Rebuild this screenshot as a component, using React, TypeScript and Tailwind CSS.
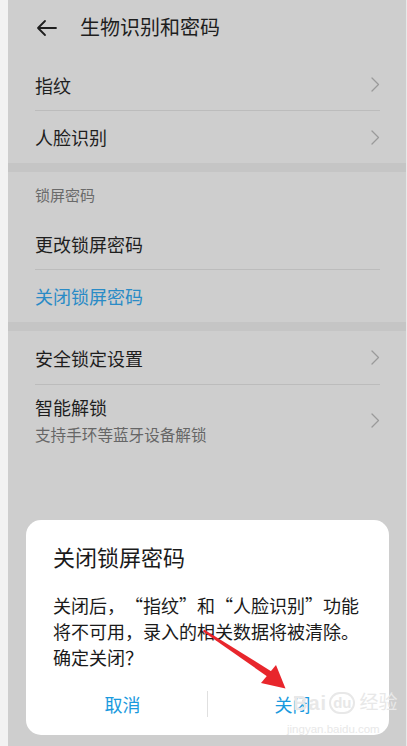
import React from "react";

const font = { fontFamily: '"Noto Sans CJK SC", "Noto Sans", sans-serif' };

function Chevron() {
  return (
    <svg width="10" height="17" viewBox="0 0 10 17" className="shrink-0">
      <path d="M2 2 L8.5 8.5 L2 15" fill="none" stroke="#9a9a9a" strokeWidth="1.3" strokeLinecap="round" strokeLinejoin="round" />
    </svg>
  );
}

function Row({ title, blue, chevron, h }: { title: string; blue?: boolean; chevron?: boolean; h: string }) {
  return (
    <div className={`flex items-center justify-between pl-[27px] pr-[26px] ${h}`}>
      <span className={`text-[18px] leading-[24px] ${blue ? "text-[#2a8bc6]" : "text-[#1e1e1e]"}`}>{title}</span>
      {chevron && <Chevron />}
    </div>
  );
}

function Divider() {
  return <div className="ml-[27px] mr-[26px] h-px bg-[#bcbcbc]" />;
}

function L({ c }: { c: string }) {
  return <span className="inline-block w-[18px] text-left">{c}</span>;
}
function R({ c }: { c: string }) {
  return <span className="inline-block w-[18px] text-right">{c}</span>;
}
function C({ c }: { c: string }) {
  return <span className="inline-block w-[18px] text-center">{c}</span>;
}

export default function App() {
  return (
    <div lang="zh-CN" className="relative w-[407px] h-[746px] overflow-hidden bg-[#f2f2f2] flex" style={font}>
      <div className="w-[8px] shrink-0" />
      <div className="flex-1 bg-[#cecece] flex flex-col">
        {/* header */}
        <div className="h-[56px] flex items-center pl-[28px]">
          <svg width="22" height="18" viewBox="0 0 22 18">
            <path d="M20 9 H2 M9 2 L2 9 L9 16" fill="none" stroke="#1e1e1e" strokeWidth="1.8" strokeLinecap="round" strokeLinejoin="round" />
          </svg>
          <span className="ml-[22px] text-[20px] text-[#1e1e1e] leading-[28px] -mt-[2px]">生物识别和密码</span>
        </div>
        <div className="h-[3px]" />
        <Row title="指纹" chevron h="h-[51px]" />
        <Divider />
        <Row title="人脸识别" chevron h="h-[52px]" />
        <div className="h-[9px] bg-[#c5c5c5]" />
        <div className="h-[46px] flex items-center pl-[27px] text-[15px] text-[#6a6a6a]">锁屏密码</div>
        <Row title="更改锁屏密码" h="h-[51px]" />
        <Divider />
        <Row title="关闭锁屏密码" blue h="h-[52px]" />
        <div className="h-[9px] bg-[#c5c5c5]" />
        <Row title="安全锁定设置" chevron h="h-[53px]" />
        <Divider />
        <div className="flex items-center justify-between pl-[27px] pr-[26px] pt-[10px]">
          <div className="flex flex-col">
            <span className="text-[18px] leading-[24px] text-[#1e1e1e]">智能解锁</span>
            <span className="text-[15.6px] leading-[22px] mt-[4px] text-[#666666]">支持手环等蓝牙设备解锁</span>
          </div>
          <Chevron />
        </div>
      </div>
      <div className="w-px shrink-0 bg-[#e9e9e9]" />

      {/* dialog */}
      <div className="absolute left-[26px] top-[520px] w-[363px] h-[215px] bg-white rounded-[15px] flex flex-col">
        <div className="pl-[27px] pt-[21px] text-[22px] leading-[30px] text-[#1a1a1a]">关闭锁屏密码</div>
        <div className="pl-[27px] mt-[21px] text-[18px] leading-[26px] text-[#1a1a1a] whitespace-nowrap">
          <div>关闭后<L c="，" /><R c="“" />指纹<L c="”" />和<R c="“" />人脸识别<L c="”" />功能</div>
          <div>将不可用<L c="，" />录入的相关数据将被清除。</div>
          <div>确定关闭<C c="？" /></div>
        </div>
        <div className="mt-[10px] mx-[12px] h-[48px] flex items-center">
          <div className="flex-1 text-center text-[18px] text-[#1a9ade]">取消</div>
          <div className="w-px h-[26px] bg-[#e0e0e0]" />
          <div className="flex-1 text-center text-[18px] text-[#1a9ade]">关闭</div>
        </div>
      </div>

      {/* watermark */}
      <div className="absolute left-[293px] top-[692px] flex items-center gap-[2px] text-[#e8e8e8]" style={{ fontFamily: '"Liberation Sans", "Noto Sans CJK SC", sans-serif' }}>
        <span className="text-[20px] font-bold leading-[22px] tracking-[1px]">Bai</span>
        <span className="text-[15px] font-bold leading-[18px] rounded-full border-2 border-[#e8e8e8] px-[2px]">du</span>
        <span className="text-[19px] leading-[22px] ml-[2px]">经验</span>
      </div>
      <div className="absolute left-[287px] top-[722px] text-[11.5px] leading-[14px] text-[#e8e8e8]" style={{ fontFamily: '"Liberation Sans", sans-serif' }}>jingyan.baidu.com</div>

      {/* red arrow */}
      <svg className="absolute left-0 top-0" width="407" height="746" viewBox="0 0 407 746">
        <path d="M203 631.5 L268 677 L271.5 671.5 L204 629.5 Z" fill="#e8262c" />
        <path d="M285.5 688.5 L261 683 L276 665 Z" fill="#e8262c" />
      </svg>
    </div>
  );
}
